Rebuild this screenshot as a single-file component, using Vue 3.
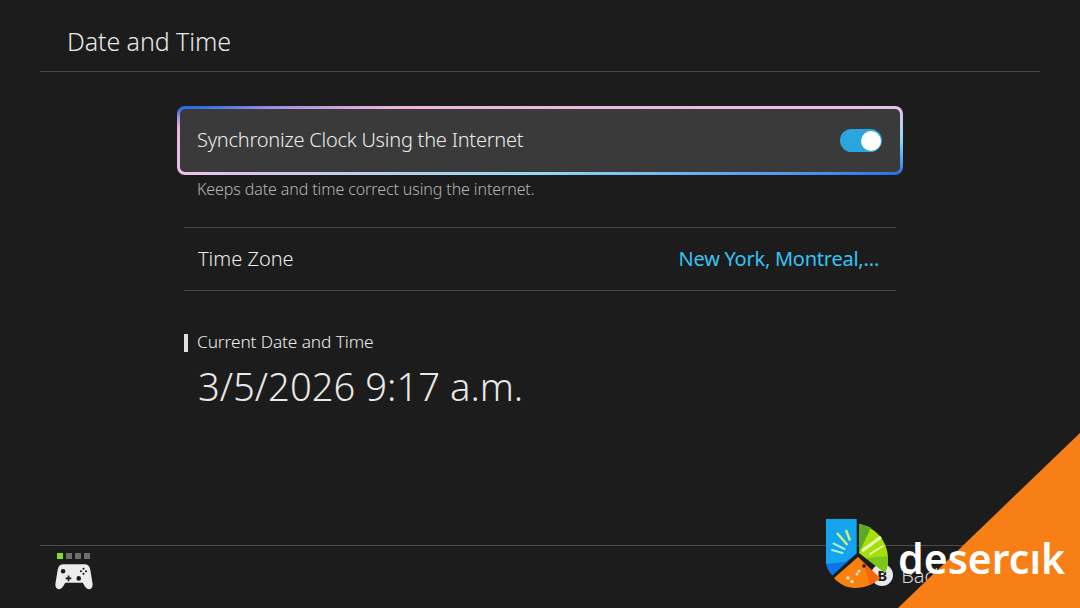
<script setup>
const players = [true, false, false, false]
</script>

<template>
  <div class="page">
    <header class="header"><h1>Date and Time</h1></header>
    <main class="main">
      <div class="column">
        <div class="focus">
          <div class="card">
            <span>Synchronize Clock Using the Internet</span>
            <span class="toggle"><span class="knob"></span></span>
          </div>
        </div>
        <p class="desc">Keeps date and time correct using the internet.</p>
        <div class="row">
          <span>Time Zone</span>
          <span class="value">New York, Montreal,…</span>
        </div>
        <div class="section"><span>Current Date and Time</span></div>
        <div class="clock">3/5/2026 9:17 a.m.</div>
      </div>
    </main>
    <footer class="footer">
      <div class="controller">
        <div class="dots">
          <i v-for="(on, n) in players" :key="n" :class="{ on }"></i>
        </div>
        <svg class="pad" width="38" height="27" viewBox="0 0 40 28">
          <path fill="#ececec" fill-rule="evenodd" d="M9 1h22c3.500 0 5.400 2 6.100 5.500L39.500 21c.6 3.800-1 6.500-3.500 6.500-2.200 0-3.400-1.300-5-3.700l-1.800-3.300H10.800L9 23.800c-1.600 2.400-2.800 3.700-5 3.700-2.500 0-4.100-2.700-3.500-6.500L2.900 6.500C3.600 3 5.500 1 9 1z" />
          <circle cx="8.500" cy="8.500" r="2.400" fill="#1c1c1c" />
          <path fill="#1c1c1c" d="M13.300 13h1.800v2.100h2.100v1.800h-2.100v2.100h-1.800v-2.100h-2.100v-1.800h2.100z" />
          <circle cx="25" cy="16" r="2.400" fill="#1c1c1c" />
          <g fill="#1c1c1c">
            <circle cx="30" cy="5.800" r="1.100" />
            <circle cx="30" cy="11.200" r="1.100" />
            <circle cx="27.300" cy="8.500" r="1.100" />
            <circle cx="32.700" cy="8.500" r="1.100" />
          </g>
        </svg>
      </div>
      <div class="back">
        <span class="b">B</span>
        <span>Back</span>
      </div>
    </footer>

    <div class="corner"></div>
    <svg class="logo" width="66" height="72" viewBox="826 518 66 72">
      <path fill="#0a76e6" d="M826 519h30.500v34.500L832.500 575.500c-4-3.500-6.500-9-6.500-15z" />
      <path fill="#14a3ee" d="M826 519h30.500v34.500L845 562l-19 2z" />
      <g stroke="#c9f07c" stroke-width="2.400">
        <path d="M837 533l10.500 12" />
        <path d="M846 530l4 10.500" />
      </g>
      <g stroke="#a6efcf" stroke-width="2" stroke-linecap="round">
        <path d="M833.500 543.500l11 5.500" />
        <path d="M832 550l10.500 3" />
      </g>
      <path fill="#a6e00c" d="M859 524c15 2.500 29 16 29 35 0 6-1 10-3 14l-26-20z" />
      <path fill="#5aa823" d="M859 524c4 .7 8 2 12 3.500l-12 25.500z" />
      <path fill="#7cc718" d="M866 558l22-2c.4 6-.5 12-3 17z" />
      <path stroke="#e9f7b0" stroke-width="3" d="M862 551l19-14" />
      <path stroke="#e9f7b0" stroke-width="1.600" stroke-linecap="round" d="M870 554l13-8" />
      <path fill="#f7820f" d="M858 557l22 21c-6 6-15 10-25 10-8 0-16-4-21-10z" />
      <path fill="#f2680a" d="M860 559l20 19c-3 3-6 5-10 7l-4-14z" />
      <g fill="#ffe4bd">
        <circle cx="848" cy="578" r="1.800" />
        <circle cx="852" cy="581.500" r="1.700" />
        <circle cx="857" cy="574" r="1.500" />
        <circle cx="859" cy="571" r="1.500" />
      </g>
      <circle cx="864" cy="566" r="1.800" fill="#1c1c1c" />
    </svg>
    <div class="brand">desercık</div>
  </div>
</template>

<style>
html, body { margin: 0; background: #1c1c1c; }
</style>

<style scoped>
.page {
  position: relative;
  width: 1080px;
  height: 608px;
  overflow: hidden;
  display: flex;
  flex-direction: column;
  background: #1c1c1c;
  color: #ececec;
  font-family: "Noto Sans", "Open Sans", sans-serif;
  font-weight: 300;
}
.header {
  height: 61px;
  margin: 0 40px;
  padding: 10px 27px 0;
  border-bottom: 1px solid #4a4a4a;
  display: flex;
  align-items: center;
}
.header h1 {
  margin: 0;
  font-size: 25px;
  font-weight: 300;
  letter-spacing: -0.08px;
  color: #e8e8e8;
}
.main {
  flex: 1;
  display: flex;
  justify-content: center;
  padding-top: 34px;
}
.column { width: 712px; }
.focus {
  margin: 0 -7px;
  padding: 3px;
  border-radius: 8px;
  background: linear-gradient(to bottom right, #2668e8 0%, #2e6fe6 2.500%, #a58fe2 8%, #efb4dc 16%, #e6c2ea 50%, #93d9f2 74%, #4f93ee 92%, #2668e8 100%);
}
.card {
  height: 61px;
  padding: 0 18px 2px 17px;
  border-radius: 5px;
  background: #3a3a3a;
  display: flex;
  align-items: center;
  justify-content: space-between;
  font-size: 20px;
  letter-spacing: -0.23px;
}
.toggle {
  width: 42px;
  height: 23px;
  margin-top: 2px;
  border-radius: 12px;
  background: #2ba5dd;
  position: relative;
}
.knob {
  position: absolute;
  right: 1px;
  top: 1.500px;
  width: 20px;
  height: 20px;
  border-radius: 50%;
  background: #fff;
}
.desc {
  margin: 4px 0 0;
  padding: 0 13px;
  height: 48px;
  font-size: 16px;
  letter-spacing: -0.1px;
  color: #b4b4b4;
  line-height: 21px;
}
.row {
  height: 61px;
  padding: 0 17px 1px 14px;
  border-top: 1px solid #4a4a4a;
  border-bottom: 1px solid #4a4a4a;
  display: flex;
  align-items: center;
  justify-content: space-between;
  font-size: 20px;
  letter-spacing: 0;
}
.value { color: #38c2f4; font-weight: 400; letter-spacing: -0.25px; }
.section {
  margin-top: 43px;
  border-left: 4px solid #e0e0e0;
  padding-left: 9px;
  height: 18px;
  line-height: 16px;
  font-size: 17.300px;
  letter-spacing: -0.1px;
}
.clock {
  margin-top: 11px;
  padding-left: 14px;
  font-size: 38.200px;
  line-height: 46px;
  color: #e8e8e8;
}
.footer {
  height: 62px;
  margin: 0 40px;
  border-top: 1px solid #4a4a4a;
  display: flex;
  justify-content: space-between;
}
.controller { padding: 7px 0 0 15px; }
.dots { display: flex; gap: 3px; padding-left: 2px; }
.dots i { width: 6px; height: 6px; background: #6e6e6e; }
.dots i.on { background: #86e01e; }
.pad { display: block; margin-top: 4px; }
.back {
  display: flex;
  align-items: center;
  gap: 8px;
  padding-right: 96px;
  margin-top: 7px;
  height: 44px;
  font-size: 20px;
  color: #d8d8d8;
}
.b {
  width: 22px;
  height: 22px;
  border-radius: 50%;
  background: #e8e8e8;
  color: #1c1c1c;
  font-size: 15px;
  font-weight: 700;
  text-align: center;
  line-height: 22px;
}
.corner {
  position: absolute;
  right: 0;
  bottom: 0;
  width: 182px;
  height: 175px;
  background: #f77f16;
  clip-path: polygon(100% 0, 100% 100%, 0 100%);
}
.logo {
  position: absolute;
  left: 826px;
  top: 518px;
}
.brand {
  position: absolute;
  left: 898px;
  top: 530px;
  font-size: 41px;
  line-height: 56px;
  font-weight: 600;
  color: #fff;
}
</style>
